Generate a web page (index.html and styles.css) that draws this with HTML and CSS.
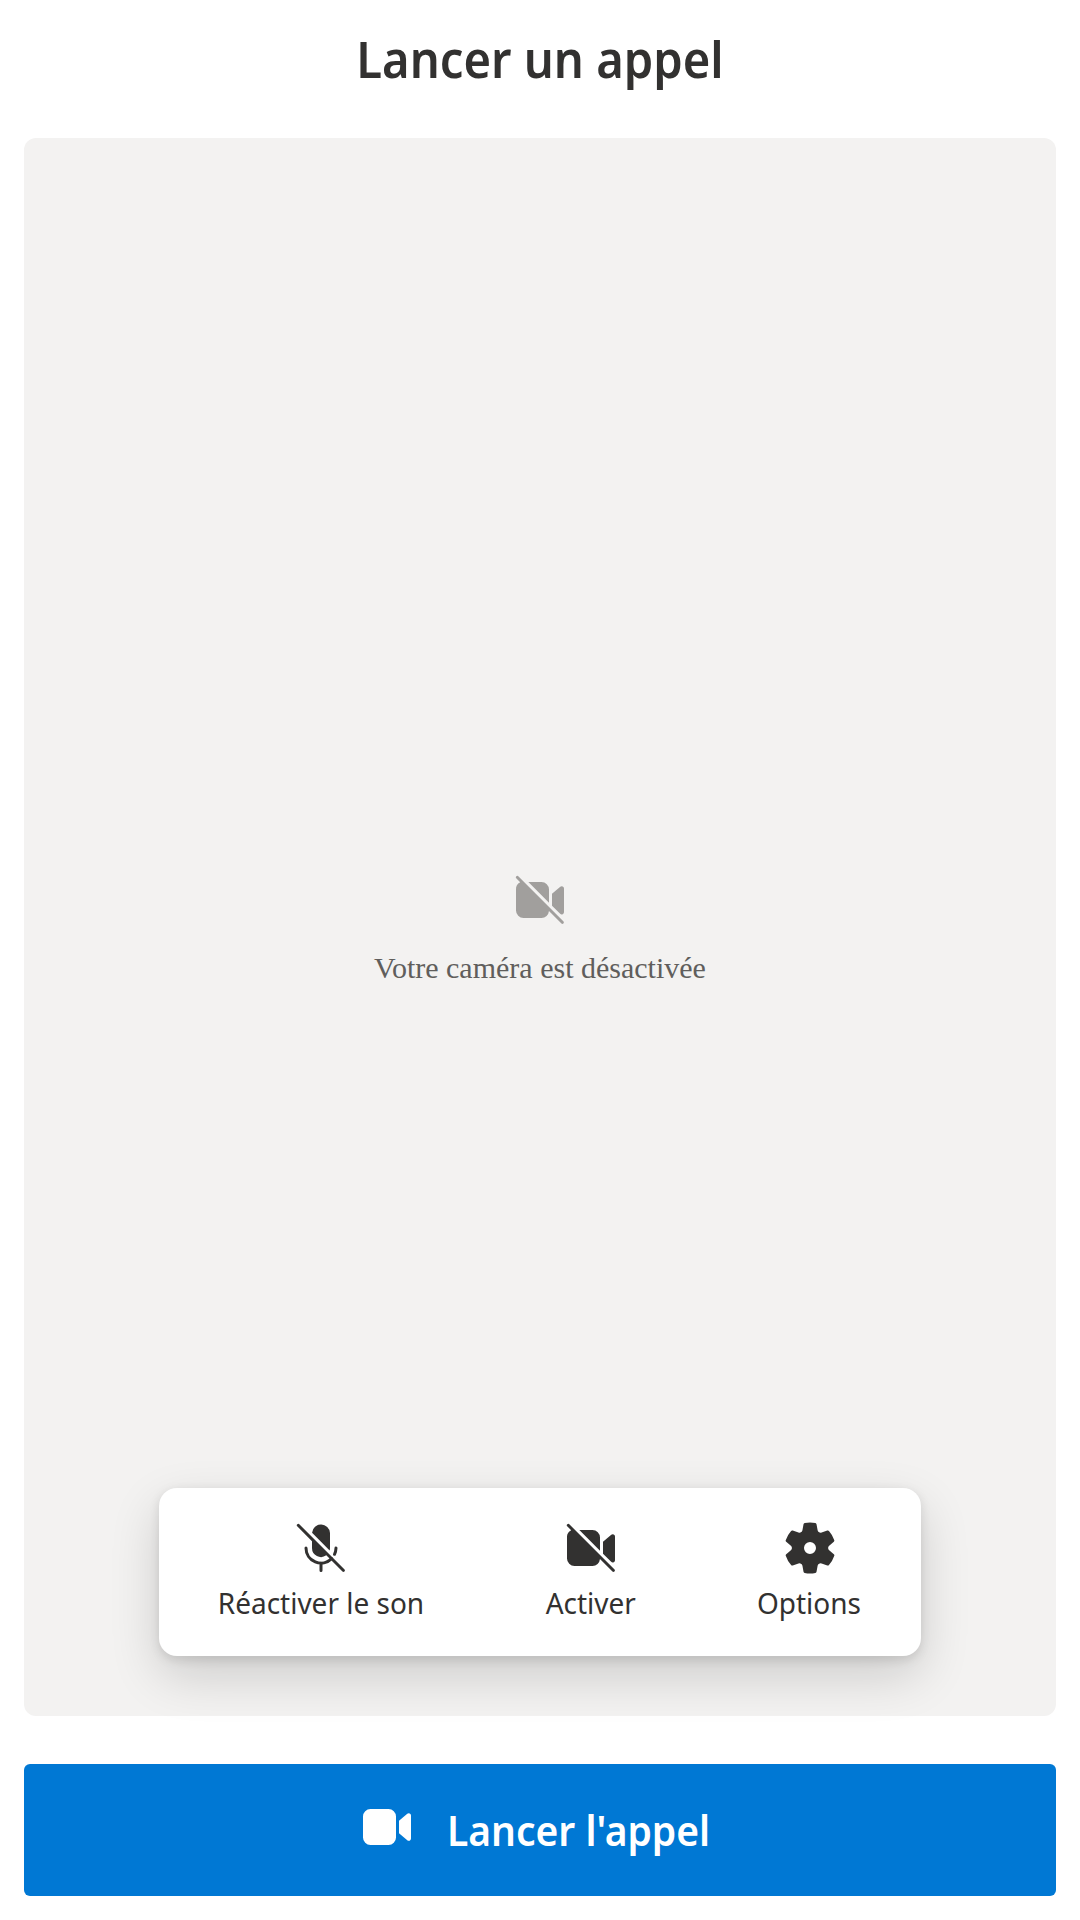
FILE: index.html
```html
<!DOCTYPE html>
<html lang="fr">
<head>
<meta charset="utf-8">
<title>Lancer un appel</title>
<link rel="stylesheet" href="styles.css">
</head>
<body>
<main class="screen">
  <h1 class="title">Lancer un appel</h1>
  <section class="preview">
    <div class="camera-off">
      <svg class="icon" viewBox="0 0 20 20"><path d="M3.4 4.1A2.5 2.5 0 0 0 2 6.5v7A2.5 2.5 0 0 0 4.5 16h6a2.5 2.5 0 0 0 2.49-2.3l4.16 4.15a.5.5 0 0 0 .7-.7l-15-15a.5.5 0 1 0-.7.7ZM6.12 4h4.38A2.5 2.5 0 0 1 13 6.5v4.38ZM14 7.93v3.95l2.72 2.7a.75.75 0 0 0 1.28-.6V6.16a.75.75 0 0 0-1.24-.57Z"/></svg>
      <p class="caption">Votre caméra est désactivée</p>
    </div>
    <div class="controls">
      <button class="control control-mic">
        <svg class="icon" viewBox="0 0 20 20"><path d="M2.85 2.15a.5.5 0 1 0-.7.7L7 7.71V10a3 3 0 0 0 4.76 2.44l5.39 5.41a.5.5 0 0 0 .7-.7ZM7.02 4.9A3 3 0 0 1 13 5v5c0 .29-.04.57-.12.83Z"/><path class="stroke" d="M5 10a5 5 0 0 0 8.54 3.54M10 15v2.5M15 10a5 5 0 0 1-.5 2.1"/></svg>
        <span class="label">Réactiver le son</span>
      </button>
      <button class="control control-camera">
        <svg class="icon" viewBox="0 0 20 20"><path d="M3.4 4.1A2.5 2.5 0 0 0 2 6.5v7A2.5 2.5 0 0 0 4.5 16h6a2.5 2.5 0 0 0 2.49-2.3l4.16 4.15a.5.5 0 0 0 .7-.7l-15-15a.5.5 0 1 0-.7.7ZM6.12 4h4.38A2.5 2.5 0 0 1 13 6.5v4.38ZM14 7.93v3.95l2.72 2.7a.75.75 0 0 0 1.28-.6V6.16a.75.75 0 0 0-1.24-.57Z"/></svg>
        <span class="label">Activer</span>
      </button>
      <button class="control control-options">
        <svg class="icon" viewBox="0 0 20 20"><path d="M1.91 7.38A8.5 8.5 0 0 1 3.7 4.3a.5.5 0 0 1 .54-.13l1.92.68a1 1 0 0 0 1.32-.76l.36-2a.5.5 0 0 1 .4-.4 8.53 8.53 0 0 1 3.55 0c.2.04.35.2.38.4l.37 2a1 1 0 0 0 1.32.76l1.92-.68a.5.5 0 0 1 .54.13 8.5 8.5 0 0 1 1.78 3.08c.06.2 0 .4-.15.54l-1.56 1.32a1 1 0 0 0 0 1.52l1.56 1.32a.5.5 0 0 1 .15.54 8.5 8.5 0 0 1-1.78 3.08.5.5 0 0 1-.54.13l-1.92-.68a1 1 0 0 0-1.32.76l-.37 2a.5.5 0 0 1-.38.4 8.53 8.53 0 0 1-3.56 0 .5.5 0 0 1-.39-.4l-.36-2a1 1 0 0 0-1.32-.76l-1.92.68a.5.5 0 0 1-.54-.13 8.5 8.5 0 0 1-1.78-3.08.5.5 0 0 1 .15-.54l1.56-1.32a1 1 0 0 0 0-1.52L2.06 7.92a.5.5 0 0 1-.15-.54ZM8 10a2 2 0 1 0 4 0 2 2 0 0 0-4 0Z"/></svg>
        <span class="label">Options</span>
      </button>
    </div>
  </section>
  <button class="start">
    <svg class="icon" viewBox="0 0 20 20"><path d="M13 6.5A2.5 2.5 0 0 0 10.5 4h-6A2.5 2.5 0 0 0 2 6.5v7A2.5 2.5 0 0 0 4.5 16h6a2.5 2.5 0 0 0 2.5-2.5v-7Zm1 1.43v4.15l2.76 2.35a.75.75 0 0 0 1.24-.57V6.16a.75.75 0 0 0-1.24-.57L14 7.93Z"/></svg>
    <span class="start-label">Lancer l'appel</span>
  </button>
</main>
</body>
</html>
```
FILE: styles.css
```css
* { box-sizing: border-box; }
body {
  margin: 0;
  background: #fff;
  color: #323130;
  font-family: "Noto Sans", "Open Sans", sans-serif;
}
button {
  margin: 0;
  padding: 0;
  border: 0;
  background: none;
  color: inherit;
  font: inherit;
}
.screen {
  display: flex;
  flex-direction: column;
  height: 1920px;
  padding: 24px;
}
.title {
  margin: 0 0 43px;
  height: 71px;
  font-size: 50px;
  font-weight: 600;
  line-height: 71px;
  text-align: center;
  white-space: nowrap;
  transform: scaleX(.943);
}
.icon {
  display: block;
  flex: none;
  width: 60px;
  height: 60px;
  fill: currentColor;
}
.stroke {
  fill: none;
  stroke: currentColor;
  stroke-linecap: round;
}
.preview {
  display: flex;
  flex-direction: column;
  align-items: center;
  height: 1578px;
  padding: 732px 0 60px;
  border-radius: 12px;
  background: #f3f2f1;
}
.camera-off {
  display: flex;
  flex-direction: column;
  align-items: center;
  color: #a19f9d;
}
.caption {
  margin: 20px 0 0;
  color: #605e5c;
  font-family: "Liberation Serif", serif;
  font-size: 30px;
  line-height: 36px;
}
.controls {
  display: flex;
  width: 762px;
  height: 168px;
  margin-top: auto;
  border-radius: 18px;
  background: #fff;
  box-shadow: 0 19.2px 50px rgba(0, 0, 0, .16), 0 3.6px 10.8px rgba(0, 0, 0, .108);
}
.control {
  display: flex;
  flex-direction: column;
  align-items: center;
  padding-top: 30px;
}
.control-mic { width: 324px; }
.control-camera { width: 216px; }
.control-options { width: 222px; }
.label {
  margin-top: 4px;
  font-size: 29px;
  line-height: 42px;
  white-space: nowrap;
  transform: scaleX(.965);
}
.control-options .label { margin-right: 2px; }
.start {
  display: flex;
  align-items: center;
  height: 132px;
  margin-top: 48px;
  padding: 0 0 6px 333px;
  border-radius: 6px;
  background: #0078d4;
  color: #fff;
}
.start-label {
  margin: 5px 0 0 30px;
  font-size: 41px;
  font-weight: 600;
  line-height: 56px;
  white-space: nowrap;
  transform: scaleX(.951);
  transform-origin: left;
}
```
